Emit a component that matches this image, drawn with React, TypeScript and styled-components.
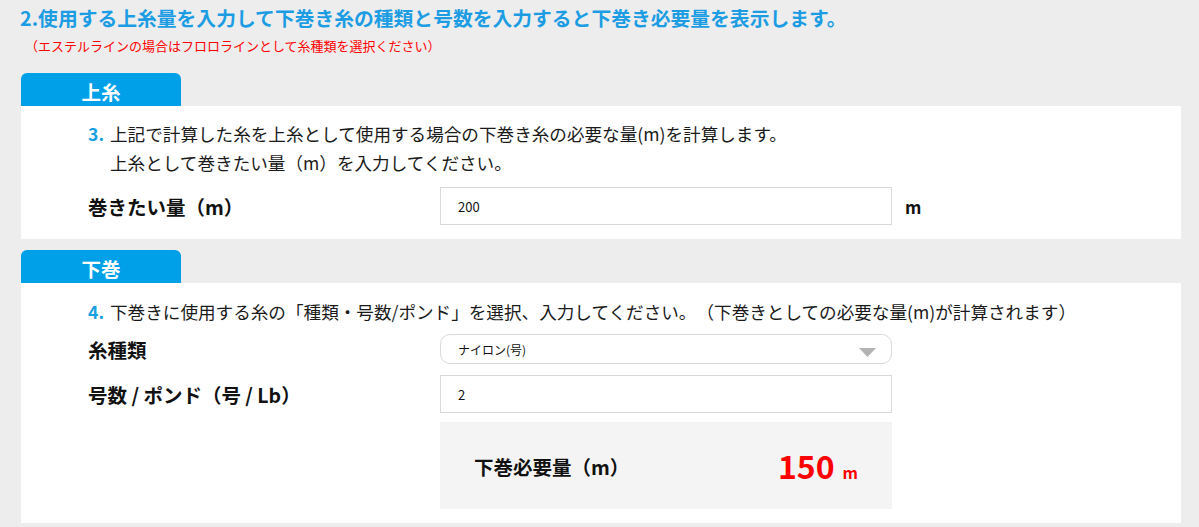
import React from "react";
import styled, { createGlobalStyle } from "styled-components";

const GlobalStyle = createGlobalStyle`
  html, body {
    margin: 0;
    padding: 0;
    background: #ededed;
  }
  body {
    font-family: "Noto Sans CJK JP", "Noto Sans", sans-serif;
    color: #1a1a1a;
    text-spacing-trim: space-all;
  }
  * { box-sizing: border-box; }
`;

const Page = styled.div`
  padding: 6px 18px 4px 21px;
`;

const Title = styled.h2`
  margin: 0 0 0 -1px;
  font-size: 19.8px;
  line-height: 24px;
  font-weight: 700;
  color: #1c9de3;
`;

const Note = styled.p`
  margin: 7px 0 0 4px;
  font-size: 13px;
  line-height: 18px;
  color: #ff0000;
`;

const Section = styled.section<{ $first?: boolean }>`
  margin-top: ${(p) => (p.$first ? "18px" : "11px")};
`;

const Tab = styled.div`
  width: 160px;
  height: 33px;
  border-radius: 6px 6px 0 0;
  background: #00a0e9;
  color: #ffffff;
  font-size: 19.5px;
  font-weight: 700;
  display: flex;
  align-items: center;
  justify-content: center;
  padding-top: 3px;
`;

const Panel = styled.div<{ $top: number }>`
  background: #ffffff;
  padding: ${(p) => p.$top}px 0 14px 67px;
`;

const Lead = styled.div`
  display: flex;
  font-size: 17.6px;
  line-height: 29px;
  color: #1a1a1a;
`;

const Num = styled.span`
  flex: 0 0 22px;
  color: #1a9ee2;
  font-weight: 700;
`;

const LeadText = styled.div``;

const Row = styled.div<{ $gap: number }>`
  display: flex;
  align-items: center;
  margin-top: ${(p) => p.$gap}px;
`;

const Label = styled.label`
  flex: 0 0 352px;
  font-size: 19.5px;
  font-weight: 700;
  color: #111111;
`;

const TextInput = styled.input`
  width: 452px;
  height: 38px;
  border: 1px solid #d9d9d9;
  border-radius: 0;
  padding: 0 17px;
  font-family: "Noto Sans CJK JP", "Noto Sans", sans-serif;
  font-size: 13px;
  color: #111;
  background: #fff;
  outline: none;
`;

const Unit = styled.span`
  margin-left: 13px;
  font-size: 17px;
  font-weight: 700;
  color: #111;
`;

const SelectWrap = styled.div`
  position: relative;
  width: 452px;
  height: 30px;
`;

const Select = styled.select`
  appearance: none;
  -webkit-appearance: none;
  width: 100%;
  height: 100%;
  border: 1px solid #d9d9d9;
  border-radius: 10px;
  padding: 0 17px;
  background: #fff;
  font-family: "Noto Sans CJK JP", "Noto Sans", sans-serif;
  font-size: 12px;
  color: #111;
  outline: none;
`;

const Arrow = styled.svg`
  position: absolute;
  right: 16px;
  top: 14px;
  pointer-events: none;
`;

const Result = styled.div`
  margin: 9px 0 0 352px;
  width: 452px;
  height: 87px;
  background: #f4f4f4;
  display: flex;
  align-items: center;
  justify-content: space-between;
  padding: 2px 34px 0 34px;
`;

const ResultLabel = styled.span`
  font-size: 19.5px;
  font-weight: 700;
  color: #111;
`;

const ResultValue = styled.span`
  color: #ff0000;
  font-weight: 700;
  display: flex;
  align-items: baseline;
  gap: 8px;
`;

const Big = styled.span`
  font-size: 32px;
  line-height: 1;
`;

const Small = styled.span`
  font-size: 16px;
`;

export default function App() {
  return (
    <>
      <GlobalStyle />
      <Page>
        <Title>2.使用する上糸量を入力して下巻き糸の種類と号数を入力すると下巻き必要量を表示します。</Title>
        <Note>（エステルラインの場合はフロロラインとして糸種類を選択ください）</Note>

        <Section $first>
          <Tab>上糸</Tab>
          <Panel $top={13}>
            <Lead>
              <Num>3.</Num>
              <LeadText>
                上記で計算した糸を上糸として使用する場合の下巻き糸の必要な量(m)を計算します。
                <br />
                上糸として巻きたい量（m）を入力してください。
              </LeadText>
            </Lead>
            <Row $gap={10}>
              <Label>巻きたい量（m）</Label>
              <TextInput defaultValue="200" />
              <Unit>m</Unit>
            </Row>
          </Panel>
        </Section>

        <Section>
          <Tab>下巻</Tab>
          <Panel $top={14}>
            <Lead>
              <Num>4.</Num>
              <LeadText>
                下巻きに使用する糸の「種類・号数/ポンド」を選択、入力してください。（下巻きとしての必要な量(m)が計算されます）
              </LeadText>
            </Lead>
            <Row $gap={8}>
              <Label>糸種類</Label>
              <SelectWrap>
                <Select defaultValue="nylon">
                  <option value="nylon">ナイロン(号)</option>
                  <option value="fluoro">フロロ(号)</option>
                  <option value="pe">PE(号)</option>
                </Select>
                <Arrow width="17" height="9" viewBox="0 0 17 9">
                  <polygon points="0,0 17,0 8.5,9" fill="#b3b3b3" />
                </Arrow>
              </SelectWrap>
            </Row>
            <Row $gap={11}>
              <Label>号数 / ポンド（号 / Lb）</Label>
              <TextInput defaultValue="2" />
            </Row>
            <Result>
              <ResultLabel>下巻必要量（m）</ResultLabel>
              <ResultValue>
                <Big>150</Big>
                <Small>m</Small>
              </ResultValue>
            </Result>
          </Panel>
        </Section>
      </Page>
    </>
  );
}
